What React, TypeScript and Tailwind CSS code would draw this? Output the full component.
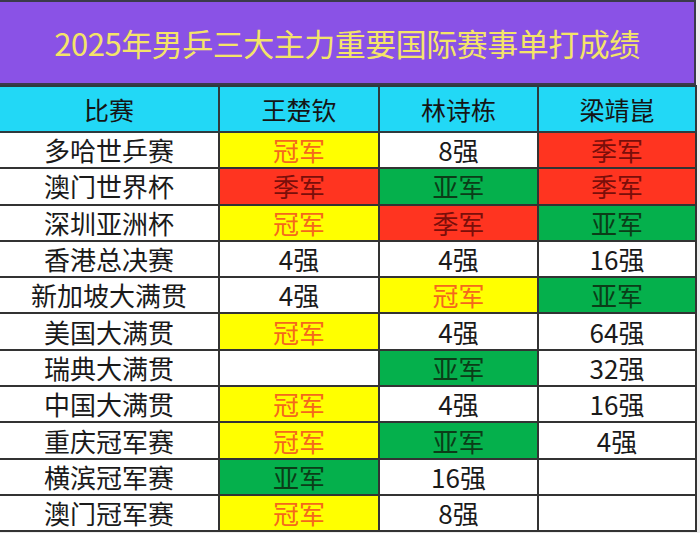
const rows: [string, string, string, string][] = [
  ["多哈世乒赛", "冠军", "8强", "季军"],
  ["澳门世界杯", "季军", "亚军", "季军"],
  ["深圳亚洲杯", "冠军", "季军", "亚军"],
  ["香港总决赛", "4强", "4强", "16强"],
  ["新加坡大满贯", "4强", "冠军", "亚军"],
  ["美国大满贯", "冠军", "4强", "64强"],
  ["瑞典大满贯", "", "亚军", "32强"],
  ["中国大满贯", "冠军", "4强", "16强"],
  ["重庆冠军赛", "冠军", "亚军", "4强"],
  ["横滨冠军赛", "亚军", "16强", ""],
  ["澳门冠军赛", "冠军", "8强", ""],
];

function cellStyle(v: string) {
  if (v === "冠军") return "bg-[#ffff00] text-[#f5681c]";
  if (v === "亚军") return "bg-[#05b04c] text-[#0b3d18]";
  if (v === "季军") return "bg-[#ff3420] text-[#7a0e0a]";
  return "bg-white text-[#1a1a1a]";
}

export default function App() {
  return (
    <div
      className="w-[700px] h-[533px] overflow-hidden bg-[#eeeeee]"
      style={{ fontFamily: '"Noto Sans CJK SC", "Noto Sans", sans-serif' }}
    >
      <div className="w-[696px]">
        <div className="h-[85px] bg-[#8a52e6] border-t-2 border-r-2 border-b-2 border-[#3a3a4a] flex items-center justify-center">
          <h1 className="text-[31px] text-[#f4e468] leading-none tracking-[-0.5px]">2025年男乒三大主力重要国际赛事单打成绩</h1>
        </div>
        <table className="border-collapse w-[696px] table-fixed">
          <colgroup>
            <col className="w-[219px]" />
            <col className="w-[160px]" />
            <col className="w-[159px]" />
            <col className="w-[158px]" />
          </colgroup>
          <thead>
            <tr className="h-[46px] bg-[#22d8f6] text-[#151515] text-[25px]">
              {["比赛", "王楚钦", "林诗栋", "梁靖崑"].map((h, i) => (
                <th
                  key={h}
                  className={`font-normal leading-none border-2 border-[#2e3a3e] ${i === 0 ? "border-l-0" : ""}`}
                >
                  {h}
                </th>
              ))}
            </tr>
          </thead>
          <tbody>
            {rows.map((r) => (
              <tr key={r[0]} className="h-[36.3px] text-[26px]">
                <td className="bg-white text-[#1a1a1a] text-center leading-none border-2 border-l-0 border-[#333]">{r[0]}</td>
                {r.slice(1).map((v, i) => (
                  <td key={i} className={`text-center leading-none border-2 border-[#333] ${cellStyle(v)}`}>
                    {v}
                  </td>
                ))}
              </tr>
            ))}
          </tbody>
        </table>
      </div>
    </div>
  );
}
